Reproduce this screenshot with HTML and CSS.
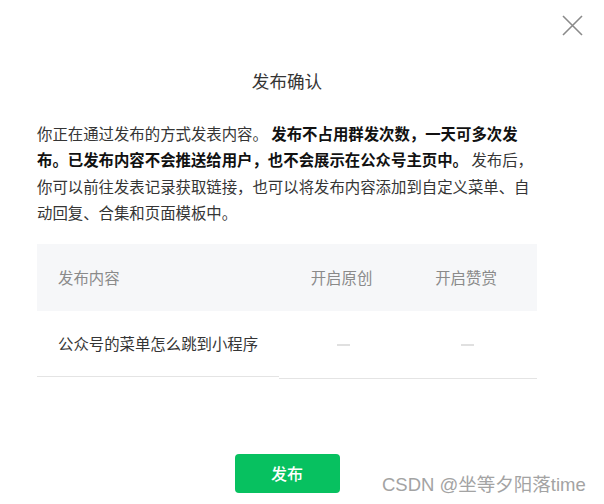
FILE: index.html
```html
<!DOCTYPE html>
<html lang="zh-CN">
<head>
<meta charset="utf-8">
<title>发布确认</title>
<link rel="stylesheet" href="styles.css">
</head>
<body>
<div class="dialog">
  <button class="close" aria-label="关闭">
    <svg width="21" height="21" viewBox="0 0 21 21"><path d="M1 1L20 20M20 1L1 20" stroke="#8a8a8a" stroke-width="1.6" fill="none"/></svg>
  </button>
  <h1 class="title">发布确认</h1>
  <p class="desc">你正在通过发布的方式发表内容。 <b>发布不占用群发次数，一天可多次发布。已发布内容不会推送给用户，也不会展示在公众号主页中。</b> 发布后，你可以前往发表记录获取链接，也可以将发布内容添加到自定义菜单、自动回复、合集和页面模板中。</p>
  <div class="table">
    <div class="thead">
      <div class="c1">发布内容</div>
      <div class="c2">开启原创</div>
      <div class="c3">开启赞赏</div>
    </div>
    <div class="trow">
      <div class="c1 cell short">公众号的菜单怎么跳到小程序</div>
      <div class="c2 cell"><span class="dash"></span></div>
      <div class="c3 cell"><span class="dash"></span></div>
    </div>
  </div>
  <div class="footer">
    <button class="primary">发布</button>
  </div>
  <div class="watermark">CSDN @坐等夕阳落time</div>
</div>
</body>
</html>
```
FILE: styles.css
```css
html, body {
  margin: 0;
  padding: 0;
  background: #fff;
}
body {
  font-family: "Noto Sans CJK SC", "Noto Sans", sans-serif;
  color: #353535;
}
.dialog {
  position: relative;
  width: 604px;
  height: 504px;
  padding: 0 67px 0 37px;
  box-sizing: border-box;
  overflow: hidden;
}
.close {
  position: absolute;
  top: 15px;
  left: 562px;
  width: 21px;
  height: 21px;
  padding: 0;
  border: 0;
  background: none;
  display: block;
}
.close svg { display: block; }
.title {
  margin: 0;
  padding-top: 69px;
  font-size: 17.6px;
  line-height: 24px;
  font-weight: normal;
  text-align: center;
  color: #353535;
}
.desc {
  margin: 27px 0 0;
  font-size: 15.4px;
  line-height: 26.4px;
  color: #353535;
}
.desc b {
  font-weight: bold;
  color: #111;
}
.table {
  margin-top: 18px;
  width: 500px;
  font-size: 15.4px;
}
.thead {
  display: flex;
  align-items: center;
  height: 67px;
  background: #f6f7f9;
  color: #8a8a8a;
  padding-right: 9px;
}
.c1 { width: 242px; padding-left: 21px; box-sizing: border-box; }
.c2 { width: 125px; text-align: center; }
.c3 { width: 124px; text-align: center; }
.trow {
  display: flex;
  align-items: flex-start;
}
.cell {
  height: 67px;
  display: flex;
  align-items: center;
  border-bottom: 1px solid #e4e4e4;
  box-sizing: border-box;
  color: #353535;
}
.cell.short { height: 66px; }
.trow .c2, .trow .c3 {
  justify-content: center;
  height: 68px;
}
.trow .c3 { width: 133px; padding-right: 9px; }
.dash {
  display: block;
  width: 13px;
  height: 2px;
  background: #e0e0e0;
  margin: 1px 0 0 3px;
}
.footer {
  display: flex;
  justify-content: center;
  margin-top: 75px;
}
.primary {
  width: 105px;
  height: 39px;
  border: 0;
  border-radius: 4px;
  background: #07c160;
  color: #fff;
  font-family: "Noto Sans CJK SC", sans-serif;
  font-size: 16px;
  font-weight: 500;
  padding: 0;
}
.watermark {
  position: absolute;
  left: 382px;
  top: 472px;
  font-family: "Liberation Sans", "Noto Sans CJK SC", sans-serif;
  font-size: 18.5px;
  line-height: 26px;
  color: #a3a3a3;
  white-space: nowrap;
}
```
